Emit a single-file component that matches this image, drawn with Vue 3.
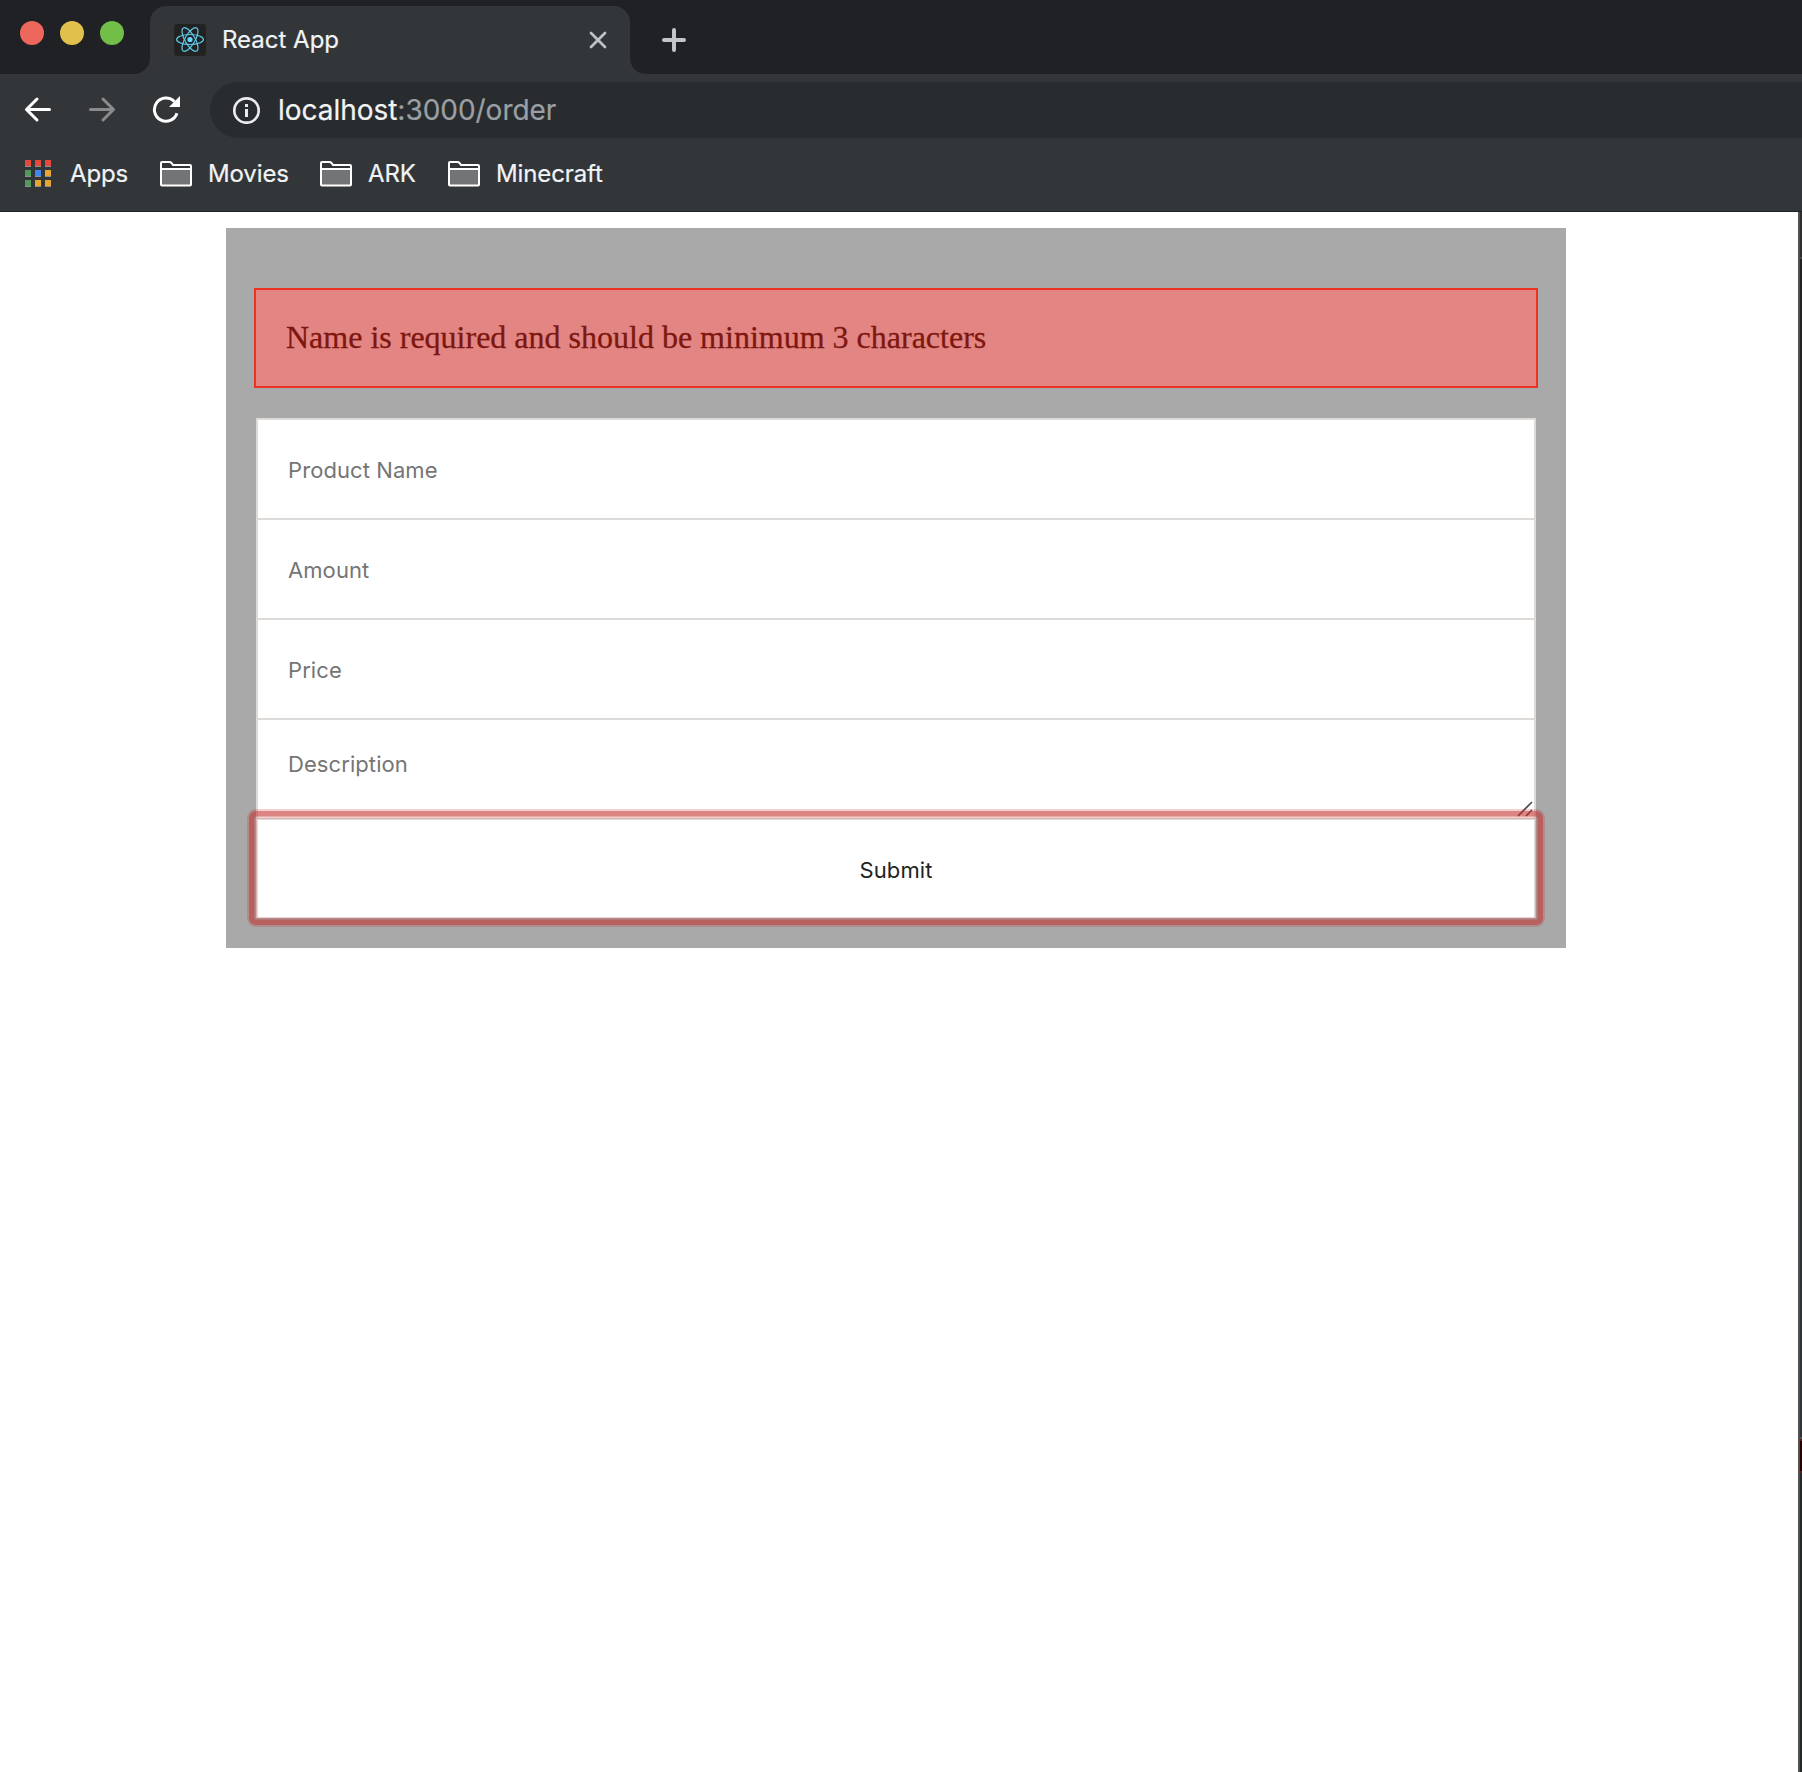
<script setup>
const bookmarks = [
  { name: 'Movies', width: 80 },
  { name: 'ARK', width: 48 },
  { name: 'Minecraft', width: 108 },
]
const fields = ['Product Name', 'Amount', 'Price']
const appColors = ['#e5493a', '#e5493a', '#e5493a', '#519a5b', '#3f86ee', '#e8a532', '#519a5b', '#e8a532', '#e8a532']
</script>

<template>
  <div class="window">
    <header class="tabs">
      <div class="lights"><i class="red"></i><i class="yellow"></i><i class="green"></i></div>
      <div class="tab">
        <svg class="favicon" width="32" height="32" viewBox="0 0 32 32">
          <rect width="32" height="32" rx="3" fill="#222" />
          <g fill="none" stroke="#61cbea" stroke-width="1.2">
            <ellipse cx="16" cy="15.5" rx="13.4" ry="5" />
            <ellipse cx="16" cy="15.5" rx="13.4" ry="5" transform="rotate(60 16 15.5)" />
            <ellipse cx="16" cy="15.5" rx="13.4" ry="5" transform="rotate(120 16 15.5)" />
          </g>
          <circle cx="16" cy="15.5" r="2.6" fill="#61dafb" />
        </svg>
        <span class="title">React App</span>
        <svg class="close" width="18" height="18" viewBox="0 0 18 18"><path d="M2 2 16 16M16 2 2 16" stroke="#bfc2c4" stroke-width="2.8" stroke-linecap="round" /></svg>
      </div>
      <svg class="plus" width="24" height="24" viewBox="0 0 24 24"><path d="M12 2V22M2 12H22" stroke="#c4c5c9" stroke-width="4" stroke-linecap="round" /></svg>
    </header>
    <nav class="toolbar">
      <svg class="back" width="28" height="28" viewBox="0 0 28 28"><path d="M13 3 2.5 13.5 13 24M2.5 13.5H25.5" /></svg>
      <svg class="forward" width="28" height="28" viewBox="0 0 28 28"><path d="M15 3 25.5 13.5 15 24M25.5 13.5H2.5" /></svg>
      <svg class="reload" width="30" height="30" viewBox="0 0 30 30">
        <path d="M22.4 6.6A11.6 11.6 0 1 0 25 18.3" fill="none" stroke="#fff" stroke-width="3" />
        <path d="M28 1V12H17Z" fill="#fff" />
      </svg>
      <div class="address">
        <svg width="28" height="28" viewBox="0 0 28 28"><circle cx="13.5" cy="14.5" r="12.2" fill="none" stroke="#e8eaed" stroke-width="2.7" /><path d="M12 8h3v3h-3zM12 13h3v8h-3z" fill="#e8eaed" /></svg>
        <span class="url">localhost<em>:3000/order</em></span>
      </div>
    </nav>
    <div class="bookmarks">
      <div class="apps"><i v-for="(c, i) in appColors" :key="i" :style="{ background: c }"></i></div>
      <span class="apps-label">Apps</span>
      <div v-for="b in bookmarks" :key="b.name" class="bookmark">
        <svg width="32" height="26" viewBox="0 0 32 26">
          <path d="M1 8H31V23.5Q31 24.5 30 24.5H2Q1 24.5 1 23.5Z" fill="#727375" />
          <path d="M1 8V2Q1 1 2 1H9.5Q10.5 1 11.5 2L13 4H30Q31 4 31 5V23.5Q31 24.5 30 24.5H2Q1 24.5 1 23.5ZH31" fill="none" stroke="#fff" stroke-width="2" />
          <path d="M1 8H31" stroke="#fff" stroke-width="2" />
        </svg>
        <span :style="{ width: b.width + 'px' }">{{ b.name }}</span>
      </div>
    </div>
    <main class="page">
      <form class="form" @submit.prevent>
        <p class="error"><span>Name is required and should be minimum 3 characters</span></p>
        <div class="fields">
          <div v-for="f in fields" :key="f" class="field"><span>{{ f }}</span></div>
          <div class="field area">
            <span>Description</span>
            <svg class="grip" width="16" height="16" viewBox="0 0 16 16"><path d="M1 15 15 1M9 15 15 9" stroke="#4a4a4e" stroke-width="1.6" /></svg>
          </div>
          <button class="submit" type="submit"><span>Submit</span></button>
        </div>
      </form>
      <aside class="edge"><i class="top"></i><i class="dark"></i><i class="red-mark"></i><i class="rest"></i></aside>
    </main>
  </div>
</template>

<style>
body {
  margin: 0;
  background: #fff;
}
</style>

<style scoped>
* {
  box-sizing: border-box;
}
.window {
  width: 1802px;
  height: 1772px;
  overflow: hidden;
  display: flex;
  flex-direction: column;
  font-family: Inter, "Liberation Sans", sans-serif;
  background: #fff;
}
svg {
  display: block;
  flex: none;
}
.tabs {
  height: 74px;
  flex: none;
  display: flex;
  background: #202124;
}
.lights {
  display: flex;
  gap: 16px;
  width: 150px;
  padding: 21px 0 0 20px;
}
.lights i {
  width: 24px;
  height: 24px;
  border-radius: 50%;
}
.red { background: #ee675c; }
.yellow { background: #e1c04c; }
.green { background: #71be48; }
.tab {
  position: relative;
  width: 480px;
  height: 68px;
  margin-top: 6px;
  padding: 0 23px 0 24px;
  border-radius: 16px 16px 0 0;
  background: #323639;
  display: flex;
  align-items: center;
}
.tab::before,
.tab::after {
  content: "";
  position: absolute;
  bottom: 0;
  width: 16px;
  height: 16px;
}
.tab::before {
  left: -16px;
  background: radial-gradient(circle at 0 0, transparent 15.5px, #323639 16.5px);
}
.tab::after {
  right: -16px;
  background: radial-gradient(circle at 100% 0, transparent 15.5px, #323639 16.5px);
}
.title {
  margin-left: 16px;
  font-size: 24px;
  line-height: 32px;
  color: #f1f3f4;
  -webkit-text-stroke: 0.2px;
}
.close {
  margin-left: auto;
}
.plus {
  margin: 28px 0 0 32px;
}
.toolbar {
  height: 72px;
  flex: none;
  display: flex;
  align-items: center;
  background: #323639;
}
.back,
.forward {
  fill: none;
  stroke: #fff;
  stroke-width: 3;
  stroke-linecap: round;
  stroke-linejoin: round;
}
.back { margin-left: 24px; }
.forward { margin-left: 36px; stroke: #8a8b8d; }
.reload { margin-left: 36px; }
.address {
  height: 56px;
  flex: 1;
  margin-left: 28px;
  padding-left: 23px;
  border-radius: 28px 0 0 28px;
  background: #282c2f;
  display: flex;
  align-items: center;
}
.url {
  margin-left: 17px;
  font-size: 28px;
  letter-spacing: -0.03px;
  color: #f1f3f4;
  -webkit-text-stroke: 0.2px;
}
.url em {
  font-style: normal;
  color: #9aa0a4;
}
.bookmarks {
  height: 66px;
  flex: none;
  display: flex;
  padding: 12px 0 0 25px;
  background: #323639;
  border-bottom: 1px solid #202124;
  color: #f1f3f4;
  font-size: 24px;
  line-height: 32px;
  letter-spacing: -0.12px;
  -webkit-text-stroke: 0.2px;
}
.apps {
  display: grid;
  grid-template-columns: repeat(3, 6px);
  grid-template-rows: repeat(3, 7px);
  gap: 3px 4px;
  padding-top: 2px;
}
.apps i {
  border-bottom: 1px solid #8d8f91;
}
.apps-label {
  width: 58px;
  margin-left: 19px;
}
.bookmark {
  display: flex;
  align-items: flex-start;
  gap: 16px;
  margin-left: 32px;
}
.bookmark span { white-space: nowrap; }
.bookmark svg { margin-top: 3px; }
.page {
  flex: 1;
  display: flex;
  justify-content: space-between;
  align-items: flex-start;
}
.form {
  width: 1340px;
  height: 720px;
  margin: 16px 0 0 226px;
  padding: 60px 28px 30px;
  background: #a9a9a9;
}
.error {
  height: 100px;
  margin: 0 0 30px;
  padding: 0 30px;
  border: 2px solid #eb3323;
  background: #e38583;
  color: #7e170f;
  font: 32px/94px "Liberation Serif", serif;
  -webkit-text-stroke: 0.3px;
}
.fields {
  margin: 0 2px;
}
.field {
  height: 100px;
  border: 2px solid #dedad7;
  border-bottom: 0;
  padding: 0 30px;
  background: #fff;
  color: #757575;
  font-size: 22px;
  line-height: 100px;
  letter-spacing: 0.08px;
}
.area {
  position: relative;
  line-height: 88px;
}
.grip {
  position: absolute;
  right: 1px;
  bottom: 1px;
}
.submit {
  position: relative;
  display: block;
  width: 100%;
  height: 100px;
  padding: 2px 0 0;
  border: 2px solid #dedad7;
  border-bottom: 0;
  background: #fff;
  color: #222;
  font: 22px/96px Inter, sans-serif;
  letter-spacing: 0.08px;
}
.submit::after {
  content: "";
  position: absolute;
  inset: -11px -11px -9px;
  border: 2px solid rgba(195, 42, 42, 0.22);
  border-radius: 9px;
  box-shadow: inset 0 0 0 5.5px rgba(195, 42, 42, 0.46), inset 0 0 0 8px rgba(195, 42, 42, 0.22);
}
.edge {
  width: 4px;
  height: 1560px;
  border-left: 2px solid #515151;
  display: flex;
  flex-direction: column;
}
.edge .top { height: 47px; background: #302e2c; border-bottom: 2px solid #484848; }
.edge .dark { height: 1180px; background: linear-gradient(#232120, #303436); border-bottom: 2px solid #515151; }
.edge .red-mark { height: 34px; background: #2a0000; border: solid #591d1d; border-width: 2px 0; }
.edge .rest { flex: 1; background: #252829; }
</style>
